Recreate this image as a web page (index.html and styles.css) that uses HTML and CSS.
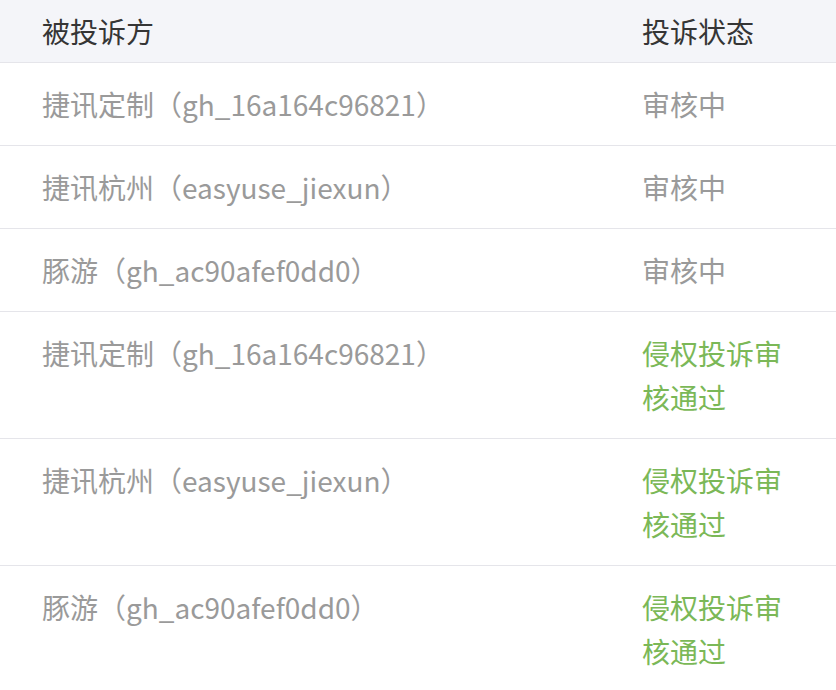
FILE: index.html
```html
<!DOCTYPE html>
<html lang="zh-CN">
<head>
<meta charset="utf-8">
<link rel="stylesheet" href="styles.css">
</head>
<body>
<table class="list">
  <thead>
    <tr><th class="c-name">被投诉方</th><th class="c-status">投诉状态</th></tr>
  </thead>
  <tbody>
    <tr><td class="c-name">捷讯定制（gh_16a164c96821）</td><td class="c-status pending">审核中</td></tr>
    <tr><td class="c-name">捷讯杭州（easyuse_jiexun）</td><td class="c-status pending">审核中</td></tr>
    <tr><td class="c-name">豚游（gh_ac90afef0dd0）</td><td class="c-status pending">审核中</td></tr>
    <tr><td class="c-name">捷讯定制（gh_16a164c96821）</td><td class="c-status passed">侵权投诉审核通过</td></tr>
    <tr><td class="c-name">捷讯杭州（easyuse_jiexun）</td><td class="c-status passed">侵权投诉审核通过</td></tr>
    <tr><td class="c-name">豚游（gh_ac90afef0dd0）</td><td class="c-status passed">侵权投诉审核通过</td></tr>
  </tbody>
</table>
</body>
</html>
```
FILE: styles.css
```css
html, body {
  margin: 0;
  padding: 0;
  background: #ffffff;
}
body {
  font-family: "Noto Sans CJK SC", "Noto Sans", sans-serif;
  font-size: 28px;
}
.list {
  width: 836px;
  border-collapse: collapse;
  table-layout: fixed;
}
.list th, .list td {
  text-align: left;
  vertical-align: top;
  font-weight: normal;
  border-bottom: 1px solid #e5e5ea;
}
.list th {
  background: #f4f5f9;
  color: #353535;
  line-height: 44px;
  padding: 9px 0;
}
.list td {
  line-height: 44px;
  padding: 19px 0;
  color: #9a9a9a;
}
.c-name {
  padding-left: 42px !important;
}
.c-status {
  width: 152px;
  padding-right: 42px !important;
}
.passed {
  color: #7bb857 !important;
}
```
